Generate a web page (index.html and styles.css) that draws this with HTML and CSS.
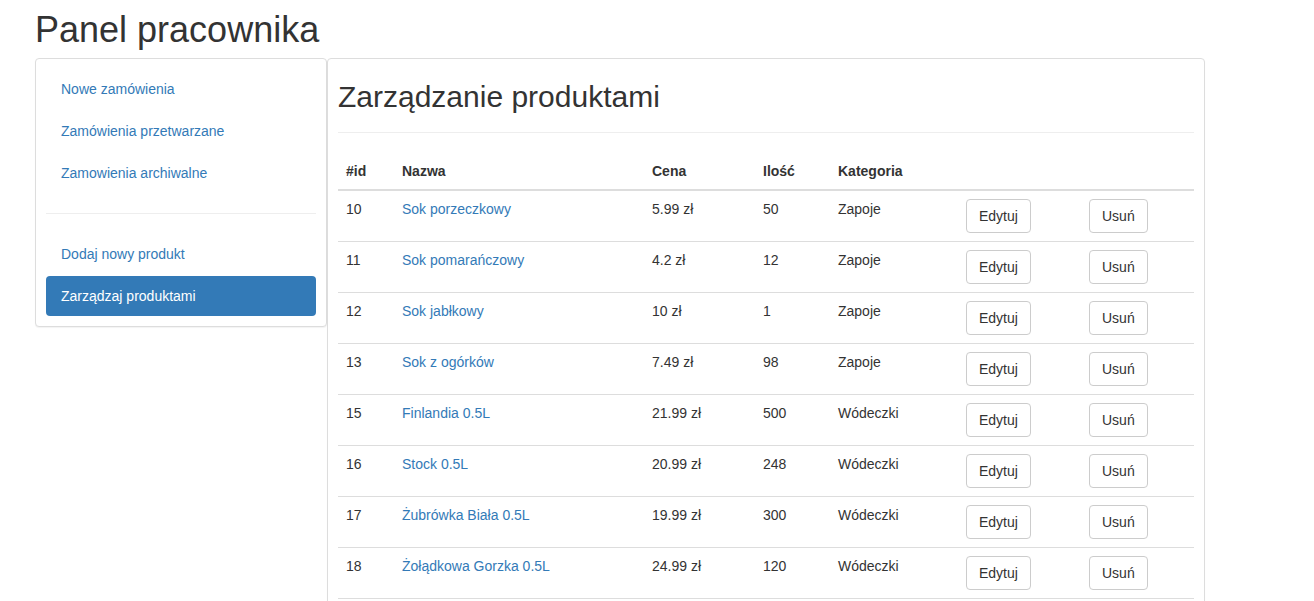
FILE: index.html
```html
<!DOCTYPE html>
<html lang="pl">
<head>
<meta charset="utf-8">
<title>Panel pracownika</title>
<link rel="stylesheet" href="styles.css">
</head>
<body>
<div class="wrap">
  <h1 class="title">Panel pracownika</h1>
  <div class="layout">
    <aside class="panel side">
      <ul class="pills">
        <li><a href="#">Nowe zamówienia</a></li>
        <li><a href="#">Zamówienia przetwarzane</a></li>
        <li><a href="#">Zamowienia archiwalne</a></li>
      </ul>
      <hr class="divider">
      <ul class="pills">
        <li><a href="#">Dodaj nowy produkt</a></li>
        <li class="active"><a href="#">Zarządzaj produktami</a></li>
      </ul>
    </aside>
    <main class="panel content">
      <div class="page-header"><h2>Zarządzanie produktami</h2></div>
      <table class="table">
        <thead>
          <tr><th class="c-id">#id</th><th class="c-name">Nazwa</th><th class="c-price">Cena</th><th class="c-qty">Ilość</th><th class="c-cat">Kategoria</th><th class="c-edit"></th><th class="c-del"></th></tr>
        </thead>
        <tbody>
          <tr><td>10</td><td><a href="#">Sok porzeczkowy</a></td><td>5.99 zł</td><td>50</td><td>Zapoje</td><td><button class="btn">Edytuj</button></td><td><button class="btn">Usuń</button></td></tr>
          <tr><td>11</td><td><a href="#">Sok pomarańczowy</a></td><td>4.2 zł</td><td>12</td><td>Zapoje</td><td><button class="btn">Edytuj</button></td><td><button class="btn">Usuń</button></td></tr>
          <tr><td>12</td><td><a href="#">Sok jabłkowy</a></td><td>10 zł</td><td>1</td><td>Zapoje</td><td><button class="btn">Edytuj</button></td><td><button class="btn">Usuń</button></td></tr>
          <tr><td>13</td><td><a href="#">Sok z ogórków</a></td><td>7.49 zł</td><td>98</td><td>Zapoje</td><td><button class="btn">Edytuj</button></td><td><button class="btn">Usuń</button></td></tr>
          <tr><td>15</td><td><a href="#">Finlandia 0.5L</a></td><td>21.99 zł</td><td>500</td><td>Wódeczki</td><td><button class="btn">Edytuj</button></td><td><button class="btn">Usuń</button></td></tr>
          <tr><td>16</td><td><a href="#">Stock 0.5L</a></td><td>20.99 zł</td><td>248</td><td>Wódeczki</td><td><button class="btn">Edytuj</button></td><td><button class="btn">Usuń</button></td></tr>
          <tr><td>17</td><td><a href="#">Żubrówka Biała 0.5L</a></td><td>19.99 zł</td><td>300</td><td>Wódeczki</td><td><button class="btn">Edytuj</button></td><td><button class="btn">Usuń</button></td></tr>
          <tr><td>18</td><td><a href="#">Żołądkowa Gorzka 0.5L</a></td><td>24.99 zł</td><td>120</td><td>Wódeczki</td><td><button class="btn">Edytuj</button></td><td><button class="btn">Usuń</button></td></tr>
        </tbody>
      </table>
    </main>
  </div>
</div>
</body>
</html>
```
FILE: styles.css
```css
* { box-sizing: border-box; }
html, body { margin: 0; padding: 0; background: #fff; }
body {
  font-family: "Liberation Sans", Arial, Helvetica, sans-serif;
  font-size: 14px;
  line-height: 20px;
  color: #333;
}
a { color: #337ab7; text-decoration: none; }
.wrap { padding-left: 35px; }
.title {
  font-size: 36px;
  font-weight: 500;
  line-height: 1.1;
  margin: 10px 0 8px;
}
.layout { display: flex; align-items: flex-start; }
.panel {
  background: #fff;
  border: 1px solid #ddd;
  border-radius: 4px;
  box-shadow: 0 1px 1px rgba(0,0,0,.05);
  padding: 10px;
}
.side { width: 292px; flex: none; }
.content { width: 878px; flex: none; padding-bottom: 40px; }
.pills { list-style: none; margin: 0; padding: 0; display: flex; flex-direction: column; gap: 2px; }
.pills a { display: block; padding: 10px 15px; border-radius: 4px; }
.pills .active a { background: #337ab7; color: #fff; }
.divider { border: 0; border-top: 1px solid #eee; margin: 20px 0; height: 0; }
.page-header {
  border-bottom: 1px solid #eee;
  padding-bottom: 9px;
  margin: 0 0 20px;
}
.page-header h2 {
  font-size: 30px;
  font-weight: 500;
  line-height: 1.1;
  margin: 11px 0 10px;
}
.table {
  width: 856px;
  table-layout: fixed;
  border-collapse: collapse;
  border-spacing: 0;
  border-bottom: 1px solid #ddd;
}
.table th, .table td { padding: 8px; text-align: left; vertical-align: top; line-height: 20px; }
.table thead th { border-bottom: 2px solid #ddd; vertical-align: bottom; font-weight: bold; }
.table tbody td { border-top: 1px solid #ddd; }
.c-id { width: 56px; }
.c-name { width: 250px; }
.c-price { width: 111px; }
.c-qty { width: 75px; }
.c-cat { width: 128px; }
.c-edit { width: 123px; }
.c-del { width: 113px; }
.btn {
  font-family: inherit;
  font-size: 14px;
  line-height: 20px;
  padding: 6px 12px;
  color: #333;
  background: #fff;
  border: 1px solid #ccc;
  border-radius: 4px;
  cursor: pointer;
  margin: 0;
}
```
